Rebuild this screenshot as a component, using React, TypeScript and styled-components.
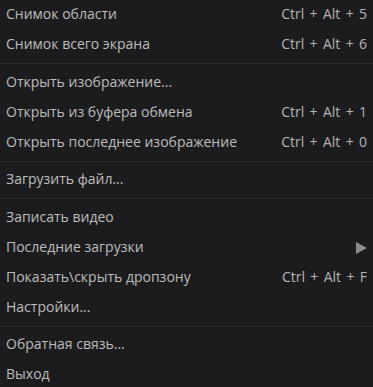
import React from "react";
import styled, { createGlobalStyle } from "styled-components";

const Global = createGlobalStyle`
  html, body { margin: 0; padding: 0; background: #1c1c1e; }
  body { font-family: "Open Sans", "Noto Sans", sans-serif; }
`;

const Menu = styled.div`
  display: flex;
  flex-direction: column;
  width: 373px;
  background: #1c1c1e;
  color: #bcbcbc;
  font-size: 14px;
`;

const Row = styled.div`
  display: flex;
  align-items: center;
  justify-content: space-between;
  box-sizing: border-box;
  height: 30px;
  padding: 0 6px 3px;
  white-space: nowrap;
`;

const Label = styled.span`
  line-height: 27px;
`;

const Shortcut = styled.span`
  line-height: 27px;
  color: #b4b4b4;
  word-spacing: 1.7px;
`;

const Separator = styled.div`
  height: 1px;
  margin: 3px 0 3.5px;
  background: #2c2c2f;
`;

const Arrow = styled.svg`
  width: 12px;
  height: 12px;
  margin-top: 3px;
`;

type Item =
  | { kind: "item"; label: string; shortcut?: string; submenu?: boolean }
  | { kind: "sep" };

const items: Item[] = [
  { kind: "item", label: "Снимок области", shortcut: "Ctrl + Alt + 5" },
  { kind: "item", label: "Снимок всего экрана", shortcut: "Ctrl + Alt + 6" },
  { kind: "sep" },
  { kind: "item", label: "Открыть изображение..." },
  { kind: "item", label: "Открыть из буфера обмена", shortcut: "Ctrl + Alt + 1" },
  { kind: "item", label: "Открыть последнее изображение", shortcut: "Ctrl + Alt + 0" },
  { kind: "sep" },
  { kind: "item", label: "Загрузить файл..." },
  { kind: "sep" },
  { kind: "item", label: "Записать видео" },
  { kind: "item", label: "Последние загрузки", submenu: true },
  { kind: "item", label: "Показать\\скрыть дропзону", shortcut: "Ctrl + Alt + F" },
  { kind: "item", label: "Настройки..." },
  { kind: "sep" },
  { kind: "item", label: "Обратная связь..." },
  { kind: "item", label: "Выход" },
];

export default function App() {
  return (
    <>
      <Global />
      <Menu>
        {items.map((it, i) =>
          it.kind === "sep" ? (
            <Separator key={i} />
          ) : (
            <Row key={i}>
              <Label>{it.label}</Label>
              {it.shortcut && <Shortcut>{it.shortcut}</Shortcut>}
              {it.submenu && (
                <Arrow viewBox="0 0 12 12">
                  <polygon points="1,0 12,6 1,12" fill="#8c8c8c" />
                </Arrow>
              )}
            </Row>
          )
        )}
      </Menu>
    </>
  );
}
